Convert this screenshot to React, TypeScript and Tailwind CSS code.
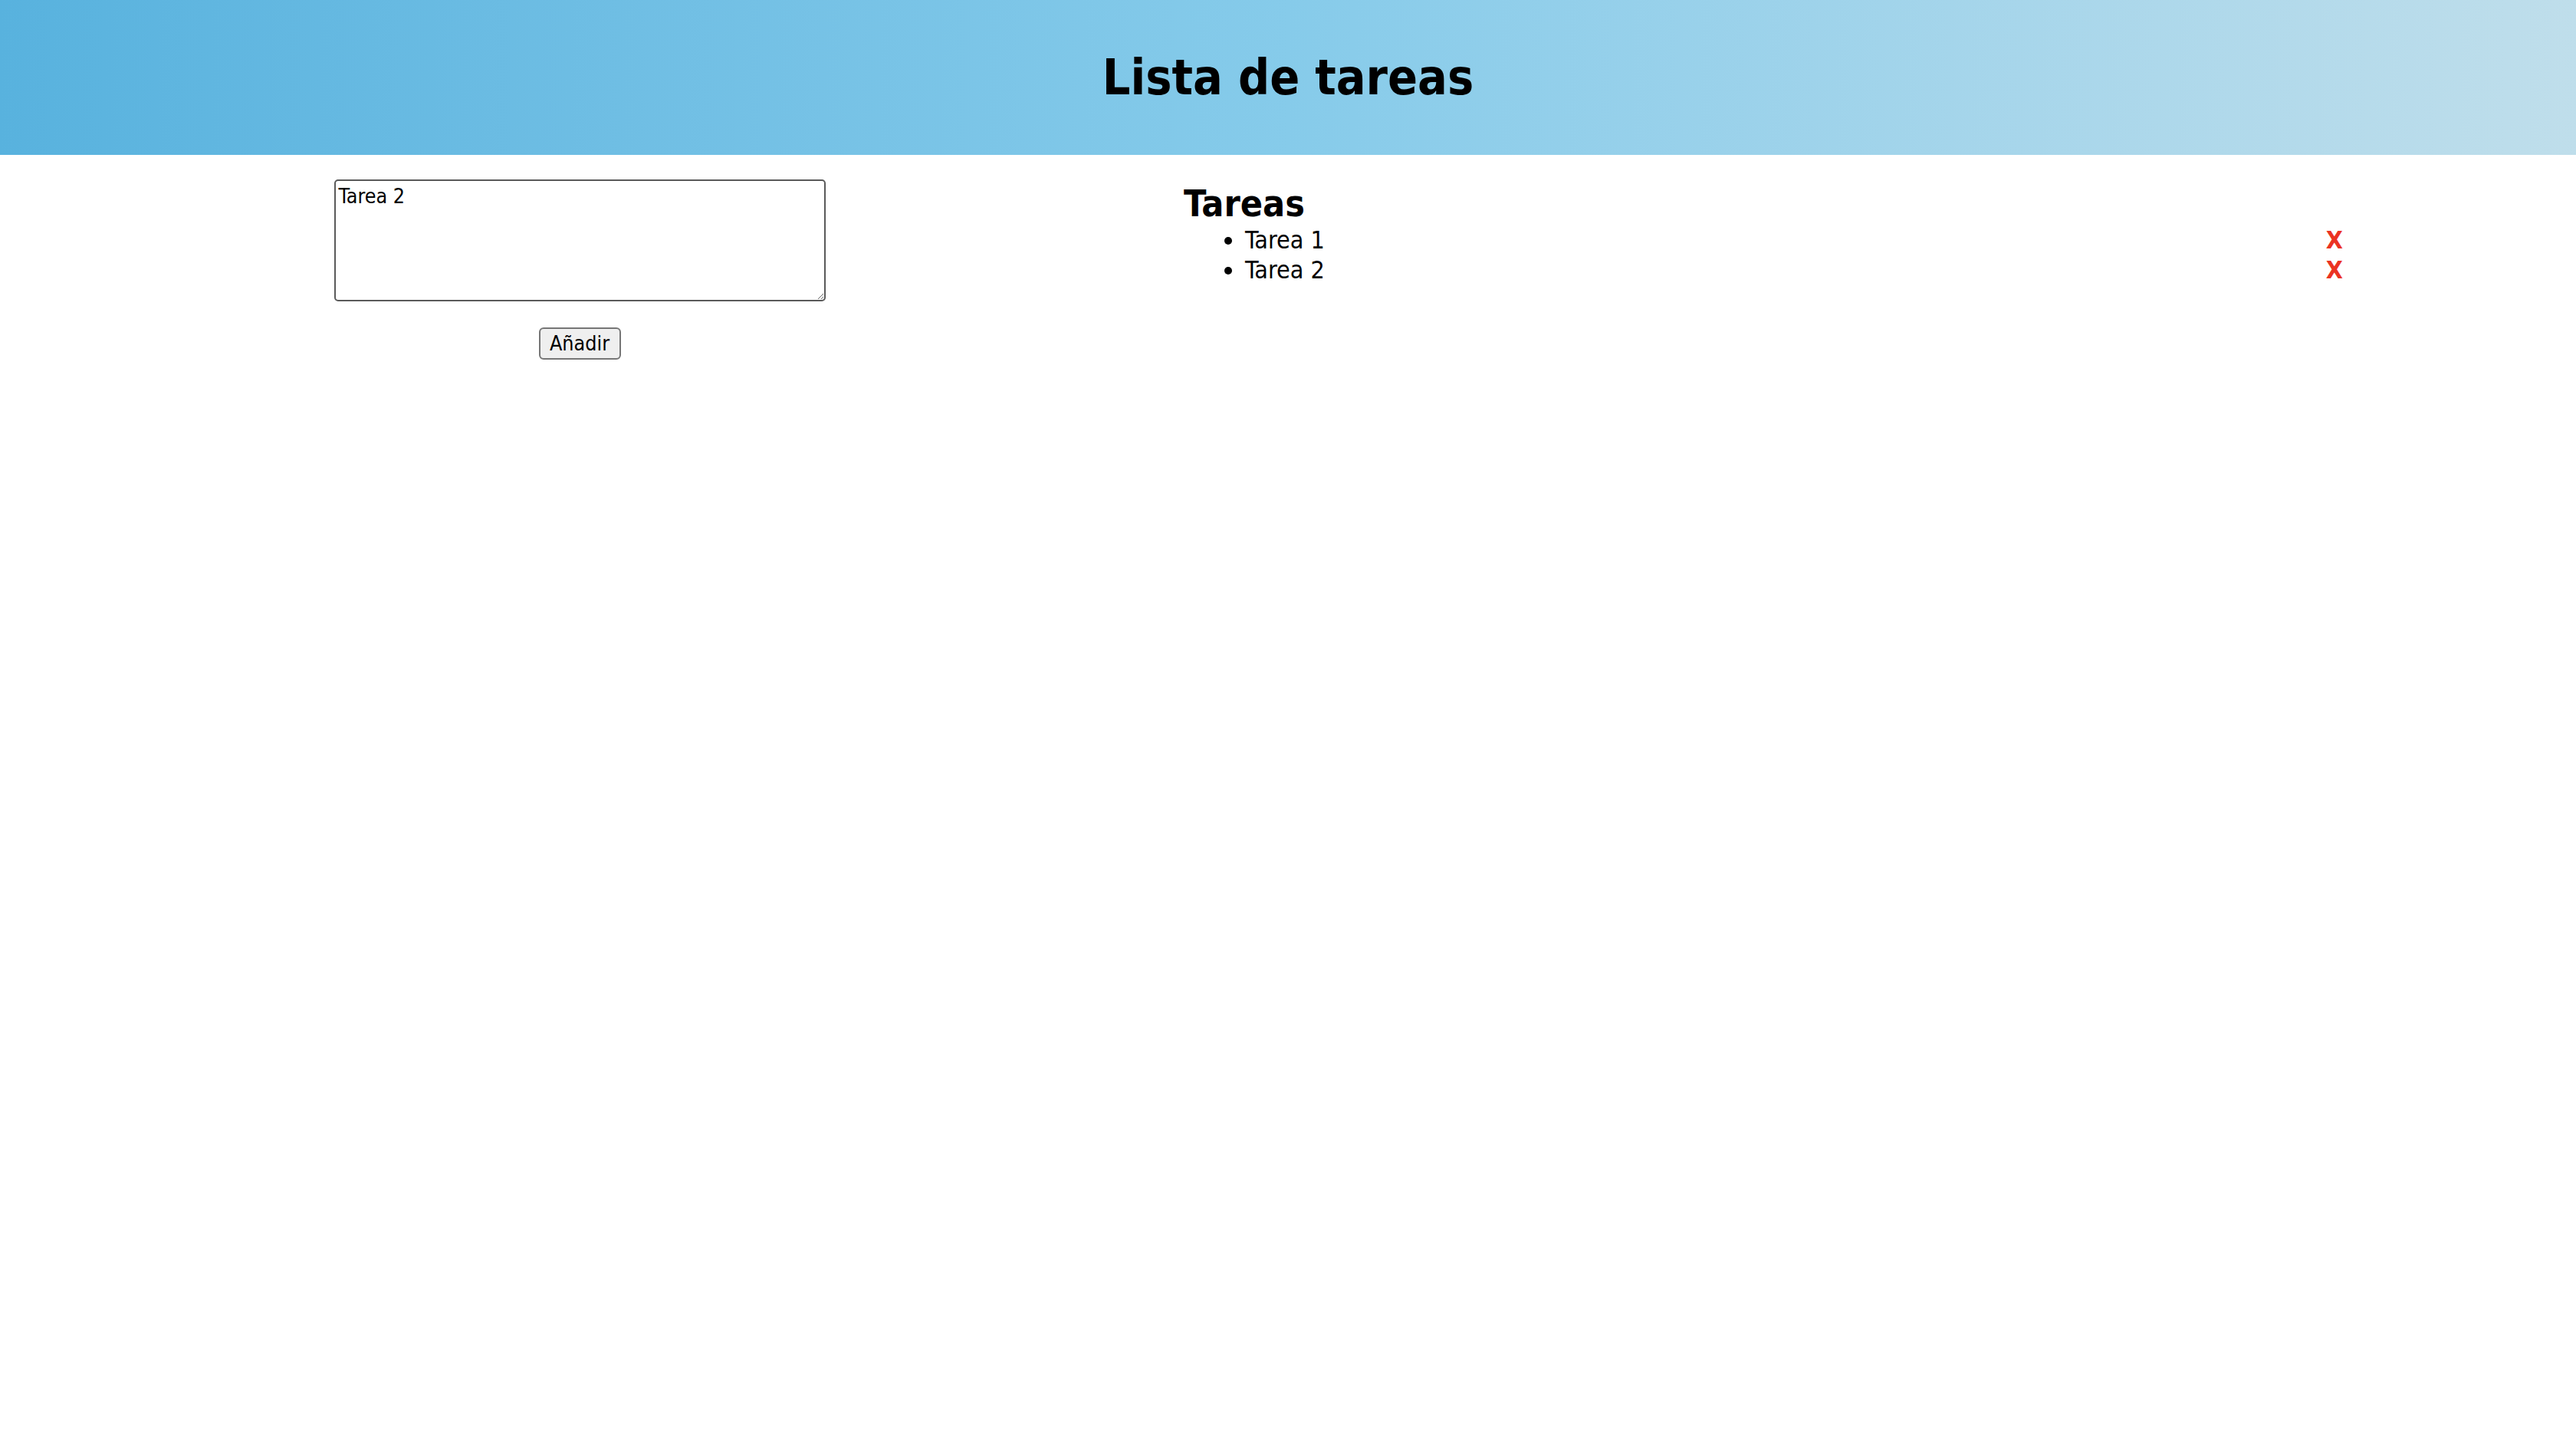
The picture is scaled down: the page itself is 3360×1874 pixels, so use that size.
import { useState } from 'react';

export default function App() {
  const [texto, setTexto] = useState('Tarea 2');
  const [tareas, setTareas] = useState<string[]>(['Tarea 1', 'Tarea 2']);

  const anadir = () => {
    if (!texto.trim()) return;
    setTareas([...tareas, texto]);
  };

  const borrar = (i: number) => {
    setTareas(tareas.filter((_, idx) => idx !== i));
  };

  return (
    <div className="min-h-screen bg-white text-black font-['DejaVu_Sans_Condensed','DejaVu_Sans',sans-serif]">
      {/* Cabecera */}
      <header className="h-[202px] flex items-center justify-center bg-linear-to-r from-[#58b2de] via-[#86cbea] to-[#bfdeeb]">
        <h1 className="text-[64px] font-bold leading-[77px]">Lista de tareas</h1>
      </header>

      <main className="flex pt-[32px]">
        {/* Formulario */}
        <div className="w-[1512px] flex flex-col items-center gap-[34px]">
          <textarea
            value={texto}
            onChange={(e) => setTexto(e.target.value)}
            className="w-[641px] h-[159px] border-2 border-[#5a5a5a] rounded-[5px] p-[4px] text-[26.67px] leading-[32px] outline-none"
          />
          <button
            onClick={anadir}
            className="w-[107px] h-[42px] border-2 border-[#767676] rounded-[6px] bg-[#efefef] text-[26.67px] leading-none"
          >
            Añadir
          </button>
        </div>

        {/* Lista */}
        <div className="flex-1 pl-[32px] pr-[304px]">
          <h2 className="text-[48px] font-bold leading-[58px] pt-[2px]">Tareas</h2>
          <ul className="list-disc pl-[80px]">
            {tareas.map((t, i) => (
              <li key={i} className="text-[32px] leading-[39px]">
                <div className="flex justify-between">
                  <span>{t}</span>
                  <button onClick={() => borrar(i)} className="font-bold text-[#eb3323]">
                    X
                  </button>
                </div>
              </li>
            ))}
          </ul>
        </div>
      </main>
    </div>
  );
}
